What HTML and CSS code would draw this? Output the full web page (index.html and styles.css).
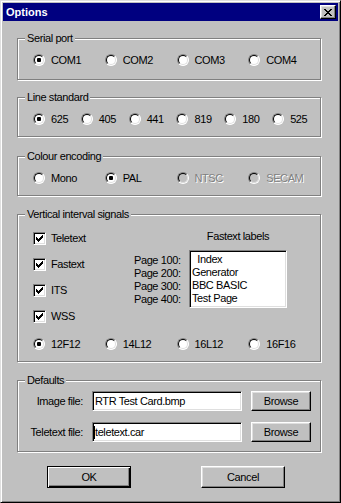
FILE: index.html
```html
<!DOCTYPE html>
<html lang="en">
<head>
  <meta charset="UTF-8">
  <title>Options</title>
  <link rel="stylesheet" href="styles.css">
</head>
<body>
  <div class="window">
    <div class="titlebar">
      <span class="title">Options</span>
      <button class="close">
        <svg width="8" height="7" viewBox="0 0 8 7" shape-rendering="crispEdges">
          <path d="M0 0h2v1h-2zM6 0h2v1h-2zM1 1h2v1h-2zM5 1h2v1h-2zM2 2h4v1h-4zM3 3h2v1h-2zM2 4h4v1h-4zM1 5h2v1h-2zM5 5h2v1h-2zM0 6h2v1h-2zM6 6h2v1h-2z" fill="#000"/>
        </svg>
      </button>
    </div>

    <div class="client">
      <fieldset class="group serial">
        <legend>Serial port</legend>
        <div class="options">
          <label class="choice"><span class="radio checked"></span>COM1</label>
          <label class="choice"><span class="radio"></span>COM2</label>
          <label class="choice"><span class="radio"></span>COM3</label>
          <label class="choice"><span class="radio"></span>COM4</label>
        </div>
      </fieldset>

      <fieldset class="group lines">
        <legend>Line standard</legend>
        <div class="options narrow">
          <label class="choice"><span class="radio checked"></span>625</label>
          <label class="choice"><span class="radio"></span>405</label>
          <label class="choice"><span class="radio"></span>441</label>
          <label class="choice"><span class="radio"></span>819</label>
          <label class="choice"><span class="radio"></span>180</label>
          <label class="choice"><span class="radio"></span>525</label>
        </div>
      </fieldset>

      <fieldset class="group colour">
        <legend>Colour encoding</legend>
        <div class="options">
          <label class="choice"><span class="radio"></span>Mono</label>
          <label class="choice"><span class="radio checked"></span>PAL</label>
          <label class="choice disabled"><span class="radio"></span>NTSC</label>
          <label class="choice disabled"><span class="radio"></span>SECAM</label>
        </div>
      </fieldset>

      <fieldset class="group vis">
        <legend>Vertical interval signals</legend>
        <div class="vis-body">
          <div class="checks">
            <label class="check-row"><span class="check"><svg width="7" height="7" viewBox="0 0 7 7" shape-rendering="crispEdges"><path d="M0 2h1v3h-1zM1 3h1v3h-1zM2 4h1v3h-1zM3 3h1v3h-1zM4 2h1v3h-1zM5 1h1v3h-1zM6 0h1v3h-1z" fill="#000"/></svg></span>Teletext</label>
            <label class="check-row"><span class="check"><svg width="7" height="7" viewBox="0 0 7 7" shape-rendering="crispEdges"><path d="M0 2h1v3h-1zM1 3h1v3h-1zM2 4h1v3h-1zM3 3h1v3h-1zM4 2h1v3h-1zM5 1h1v3h-1zM6 0h1v3h-1z" fill="#000"/></svg></span>Fastext</label>
            <label class="check-row"><span class="check"><svg width="7" height="7" viewBox="0 0 7 7" shape-rendering="crispEdges"><path d="M0 2h1v3h-1zM1 3h1v3h-1zM2 4h1v3h-1zM3 3h1v3h-1zM4 2h1v3h-1zM5 1h1v3h-1zM6 0h1v3h-1z" fill="#000"/></svg></span>ITS</label>
            <label class="check-row"><span class="check"><svg width="7" height="7" viewBox="0 0 7 7" shape-rendering="crispEdges"><path d="M0 2h1v3h-1zM1 3h1v3h-1zM2 4h1v3h-1zM3 3h1v3h-1zM4 2h1v3h-1zM5 1h1v3h-1zM6 0h1v3h-1z" fill="#000"/></svg></span>WSS</label>
          </div>

          <div class="fastext">
            <div class="fastext-title">Fastext labels</div>
            <div class="page-labels">
              <div>Page 100:</div>
              <div>Page 200:</div>
              <div>Page 300:</div>
              <div>Page 400:</div>
            </div>
            <div class="listbox">
              <div class="pre">  Index</div>
              <div>Generator</div>
              <div>BBC BASIC</div>
              <div>Test Page</div>
            </div>
          </div>
        </div>
        <div class="options packets">
          <label class="choice"><span class="radio checked"></span>12F12</label>
          <label class="choice"><span class="radio"></span>14L12</label>
          <label class="choice"><span class="radio"></span>16L12</label>
          <label class="choice"><span class="radio"></span>16F16</label>
        </div>
      </fieldset>

      <fieldset class="group defaults">
        <legend>Defaults</legend>
        <div class="files">
          <div class="file-row">
            <label class="file-label">Image file:</label>
            <div class="field">RTR Test Card.bmp</div>
            <button class="btn">Browse</button>
          </div>
          <div class="file-row">
            <label class="file-label">Teletext file:</label>
            <div class="field"><span class="caret"></span>teletext.car</div>
            <button class="btn">Browse</button>
          </div>
        </div>
      </fieldset>

      <div class="actions">
        <button class="btn big default">OK</button>
        <button class="btn big">Cancel</button>
      </div>
    </div>
  </div>
</body>
</html>
```

FILE: styles.css
```css
* {
  box-sizing: border-box;
}

body {
  margin: 0;
  background: #c0c0c0;
  color: #000;
  font-family: 'Liberation Sans', Arial, sans-serif;
  font-size: 11px;
  letter-spacing: -0.4px;
}

.window {
  width: 341px;
  height: 503px;
  background: #c0c0c0;
  border: 1px solid;
  border-color: #dfdfdf #000 #000 #dfdfdf;
  box-shadow: inset 1px 1px #fff, inset -1px -1px #808080;
  padding: 2px;
}

.titlebar {
  height: 18px;
  background: #000080;
  display: flex;
  align-items: center;
  justify-content: space-between;
  padding: 0 2px 0 3px;
}

.title {
  color: #fff;
  font-weight: bold;
  letter-spacing: 0;
}

.close {
  width: 16px;
  height: 14px;
  padding: 0;
  background: #c0c0c0;
  border: 1px solid;
  border-color: #fff #000 #000 #fff;
  box-shadow: inset -1px -1px #808080, inset 1px 1px #dfdfdf;
  display: flex;
  align-items: center;
  justify-content: center;
}

.client {
  padding: 11px 17px 0 14px;
}

/* etched group boxes */
.group {
  margin: 0;
  padding: 0;
  min-width: 0;
  border: 1px solid #808080;
  box-shadow: inset 1px 1px #fff, 1px 1px #fff;
}

.group legend {
  margin-left: 7px;
  padding: 0 2px;
  line-height: 13px;
  background: #c0c0c0;
}

.lines {
  margin-top: 11px;
}

.colour {
  margin-top: 13px;
}

.vis {
  margin-top: 12px;
}

.defaults {
  margin-top: 12px;
}

.options {
  display: flex;
  padding: 8px 0 12px 15px;
}

.lines .options,
.colour .options {
  padding-bottom: 10px;
}

.options.packets {
  padding: 14px 0 10px 15px;
}

.choice {
  display: flex;
  align-items: center;
  gap: 6px;
  width: 72px;
  height: 14px;
  line-height: 13px;
}

.narrow .choice {
  width: 48px;
}

.choice.disabled {
  color: #808080;
  text-shadow: 1px 1px 0 #fff;
}

.radio {
  position: relative;
  flex: none;
  width: 12px;
  height: 12px;
  border-radius: 50%;
  border: 1px solid;
  border-color: #808080 #fff #fff #808080;
  background: #fff;
}

.radio::before {
  content: "";
  position: absolute;
  inset: 0;
  border-radius: 50%;
  border: 1px solid;
  border-color: #000 #dfdfdf #dfdfdf #000;
}

.radio.checked::after {
  content: "";
  position: absolute;
  inset: 3px;
  border-radius: 1px;
  background: #000;
}

.disabled .radio {
  background: #c0c0c0;
}

/* vertical interval signals */
.vis-body {
  display: flex;
  align-items: flex-start;
  padding: 9px 0 0 15px;
}

.checks {
  display: flex;
  flex-direction: column;
  gap: 13px;
  width: 101px;
  margin-top: 2px;
}

.check-row {
  display: flex;
  align-items: center;
  gap: 5px;
  height: 13px;
  line-height: 13px;
}

.check {
  flex: none;
  width: 13px;
  height: 13px;
  border: 1px solid;
  border-color: #808080 #fff #fff #808080;
  box-shadow: inset 1px 1px #000, inset -1px -1px #dfdfdf;
  background: #fff;
  display: flex;
  align-items: center;
  justify-content: center;
}

.fastext {
  display: grid;
  grid-template-columns: 55px 98px;
  align-content: start;
  row-gap: 7px;
  line-height: 13px;
}

.fastext-title {
  grid-column: 2;
  text-align: center;
}

.page-labels {
  padding-top: 4px;
}

.listbox {
  height: 58px;
  background: #fff;
  border: 1px solid;
  border-color: #808080 #fff #fff #808080;
  box-shadow: inset 1px 1px #000, inset -1px -1px #dfdfdf;
  padding: 2px 2px 0 2px;
}

.pre {
  white-space: pre;
}

/* defaults */
.files {
  display: flex;
  flex-direction: column;
  gap: 11px;
  padding: 4px 0 9px 0;
}

.file-row {
  display: flex;
  align-items: center;
  gap: 9px;
  height: 20px;
}

.file-label {
  width: 65px;
  text-align: right;
}

.field {
  width: 150px;
  height: 20px;
  background: #fff;
  border: 1px solid;
  border-color: #808080 #fff #fff #808080;
  box-shadow: inset 1px 1px #000, inset -1px -1px #dfdfdf;
  padding: 0 2px;
  display: flex;
  align-items: center;
  white-space: nowrap;
  overflow: hidden;
}

.caret {
  width: 1px;
  height: 13px;
  margin-left: -1px;
  background: #000;
}

.btn {
  width: 60px;
  height: 20px;
  padding: 0;
  background: #c0c0c0;
  color: #000;
  font: inherit;
  letter-spacing: inherit;
  border: 1px solid;
  border-color: #fff #000 #000 #fff;
  box-shadow: inset -1px -1px #808080, inset 1px 1px #dfdfdf;
}

.btn.big {
  width: 84px;
  height: 22px;
}

.btn.default {
  border-color: #000;
  box-shadow: inset 1px 1px #fff, inset -1px -1px #000, inset -2px -2px #808080;
}

.actions {
  display: flex;
  gap: 70px;
  padding: 14px 0 0 30px;
}
```
